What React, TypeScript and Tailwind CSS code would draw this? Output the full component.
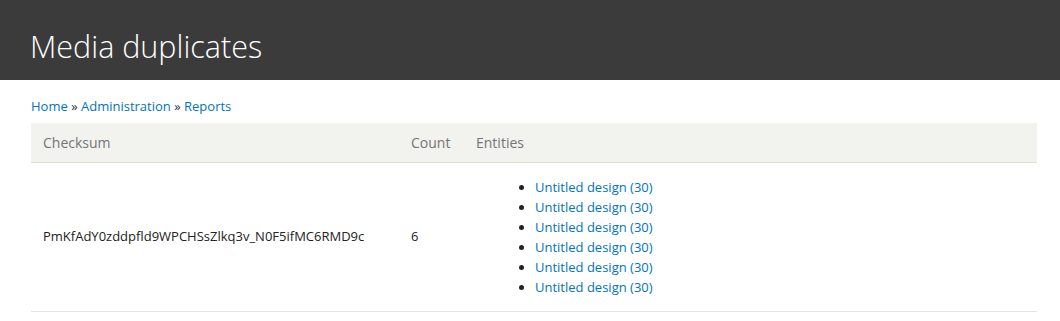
import React from "react";

const rows = [
    {
        checksum: "PmKfAdY0zddpfld9WPCHSsZlkq3v_N0F5ifMC6RMD9c",
        count: 6,
        entities: Array.from({ length: 6 }, () => "Untitled design (30)"),
    },
];

export default function App() {
    return (
        <div className="min-h-[321px] bg-white font-['Open_Sans',sans-serif]">
            <header className="h-20 bg-[#3b3b3b] pl-[30px] pt-[26px]">
                <h1 className="text-[30.5px] font-light leading-[40px] text-white">Media duplicates</h1>
            </header>

            <div className="pl-[31px] pr-[23px]">
                <nav className="pt-[16px] pb-[7px] text-[13px] leading-[20px] text-[#0074bd]">
                    <a href="#">Home</a> <span className="text-[#333]">»</span> <a href="#">Administration</a>{" "}
                    <span className="text-[#333]">»</span> <a href="#">Reports</a>
                </nav>

                <table className="w-full border-collapse text-left">
                    <thead>
                        <tr className="h-[39px] border-b border-[#e0ddd5] bg-[#f2f2ef] text-[14px] font-normal text-[#757575]">
                            <th className="w-[368px] px-3 font-normal">Checksum</th>
                            <th className="w-[65px] px-3 font-normal">Count</th>
                            <th className="px-3 font-normal">Entities</th>
                        </tr>
                    </thead>
                    <tbody>
                        {rows.map((row) => (
                            <tr key={row.checksum} className="border-b border-[#e6e4df] text-[13px] text-[#222]">
                                <td className="px-3">{row.checksum}</td>
                                <td className="px-3">{row.count}</td>
                                <td className="px-3 py-[14px]">
                                    <ul className="list-disc pl-[59px] leading-[20px]">
                                        {row.entities.map((name, i) => (
                                            <li key={i} className="marker:text-[#222]">
                                                <a href="#" className="text-[#0074bd]">
                                                    {name}
                                                </a>
                                            </li>
                                        ))}
                                    </ul>
                                </td>
                            </tr>
                        ))}
                    </tbody>
                </table>
            </div>
        </div>
    );
}
